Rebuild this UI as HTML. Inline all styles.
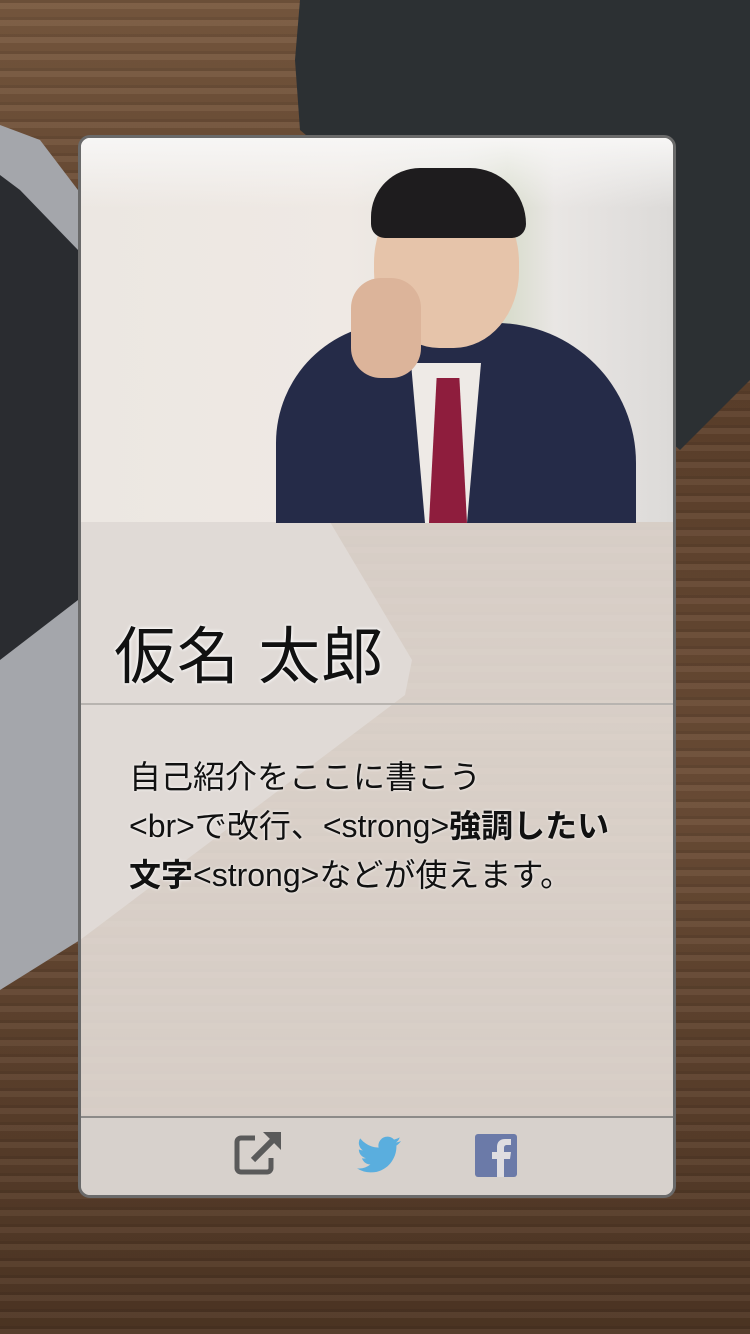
<!DOCTYPE html>
<html><head><meta charset="utf-8"><style>
html,body{margin:0;padding:0}
body{width:750px;height:1334px;position:relative;overflow:hidden;background:linear-gradient(180deg,#7a5a40 0%,#5e412c 30%,#6d4e37 60%,#4f3624 100%);font-family:"Liberation Sans","Noto Sans CJK JP",sans-serif}
.wood{position:absolute;inset:0;background:repeating-linear-gradient(180deg,rgba(0,0,0,.12) 0 3px,rgba(255,255,255,.04) 3px 9px,rgba(0,0,0,.06) 9px 17px)}
.note{position:absolute;left:0;top:0;width:750px;height:460px;background:#2c3033;clip-path:polygon(300px 0,750px 0,750px 380px,680px 450px,300px 130px,295px 60px)}
.lap{position:absolute;left:0;top:0;width:750px;height:1000px;background:#a4a6ab;clip-path:polygon(0 125px,40px 140px,330px 522px,412px 660px,405px 695px,80px 940px,0 990px)}
.keys{position:absolute;left:0;top:0;width:750px;height:700px;background:#2a2c30;clip-path:polygon(0 175px,20px 190px,78px 250px,78px 600px,0 660px)}
.card{position:absolute;left:78px;top:135px;width:592px;height:1057px;border:3px solid #6a6a6a;border-radius:12px;overflow:hidden;background:rgba(232,225,220,.88)}
.photo{position:absolute;left:0;top:0;width:592px;height:384px;background:linear-gradient(90deg,#ece7e2 0%,#efe9e4 45%,#e4e4de 65%,#d8dccc 72%,#e9e6e4 80%,#dcdad8 100%)}
.top{position:absolute;left:0;top:0;width:592px;height:70px;background:linear-gradient(#f7f6f5,rgba(247,246,245,0))}
.body{position:absolute;left:195px;top:185px;width:360px;height:200px;background:#252b48;border-radius:120px 140px 0 0}
.head{position:absolute;left:293px;top:40px;width:145px;height:170px;background:#e6c4aa;border-radius:50% 50% 45% 45%}
.hair{position:absolute;left:290px;top:30px;width:155px;height:70px;background:#1e1c1e;border-radius:70px 80px 20px 20px}
.shirt{position:absolute;left:330px;top:225px;width:70px;height:160px;background:#eeeae6;clip-path:polygon(0 0,100% 0,80% 100%,20% 100%)}
.tie{position:absolute;left:348px;top:240px;width:38px;height:145px;background:#8e1d3d;clip-path:polygon(20% 0,80% 0,100% 100%,0 100%)}
.hand{position:absolute;left:270px;top:140px;width:70px;height:100px;background:#dcb49a;border-radius:30px}
.name{position:absolute;left:0;top:384px;width:592px;height:181px;border-bottom:2px solid #b8b4b0}
.name span{position:absolute;left:33px;top:84px;font-size:62px;color:#111;letter-spacing:1px;text-shadow:0 0 4px #fff,0 0 3px #fff}
.txt{position:absolute;left:48px;top:615px;font-size:32px;line-height:49px;color:#111;width:540px;text-shadow:0 0 3px #fff;white-space:nowrap}
.foot{position:absolute;left:0;top:978px;width:592px;height:79px;border-top:2px solid #8c8a88;background:rgba(215,210,205,.8)}
</style></head><body>
<div class="wood"></div>
<div class="note"></div>
<div class="lap"></div>
<div class="keys"></div>
<div class="card">
 <div class="photo"><div class="top"></div><div class="body"></div><div class="shirt"></div><div class="tie"></div><div class="head"></div><div class="hair"></div><div class="hand"></div></div>
 <div class="name"><span>仮名 太郎</span></div>
 <div class="txt">自己紹介をここに書こう<br>&lt;br&gt;で改行、&lt;strong&gt;<b>強調したい</b><br><b>文字</b>&lt;strong&gt;などが使えます。</div>
 <div class="foot">
  <svg style="position:absolute;left:152px;top:12px" width="52" height="46" viewBox="0 0 52 46"><path d="M22 8H8a4 4 0 0 0-4 4v26a4 4 0 0 0 4 4h26a4 4 0 0 0 4-4V28" fill="none" stroke="#5a5a5a" stroke-width="5"/><path d="M20 30L42 8" stroke="#5a5a5a" stroke-width="6"/><path d="M30 2H48V20Z" fill="#5a5a5a"/></svg>
  <svg style="position:absolute;left:276px;top:18px" width="44" height="38" viewBox="0 0 24 20"><path d="M24 2.4a10 10 0 0 1-2.8.8A5 5 0 0 0 23.3.4a10 10 0 0 1-3.1 1.2A4.9 4.9 0 0 0 11.8 6 14 14 0 0 1 1.7.9a4.9 4.9 0 0 0 1.5 6.6A4.9 4.9 0 0 1 1 6.9a4.9 4.9 0 0 0 3.9 4.8 5 5 0 0 1-2.2.1 4.9 4.9 0 0 0 4.6 3.4A9.9 9.9 0 0 1 0 17.3 14 14 0 0 0 7.5 19.5c9 0 14-7.5 14-14v-.6A10 10 0 0 0 24 2.4z" fill="#5aaede"/></svg>
  <svg style="position:absolute;left:394px;top:16px" width="42" height="44" viewBox="0 0 42 44"><rect x="0" y="0" width="42" height="43" rx="3" fill="#6b7aa8"/><path d="M29 43V25h6l1-7h-7v-4c0-2 1-3 3-3h4V5h-6c-6 0-8 4-8 8v5h-5v7h5v18z" fill="#dfdde0"/></svg>
 </div>
</div>
</body></html>
